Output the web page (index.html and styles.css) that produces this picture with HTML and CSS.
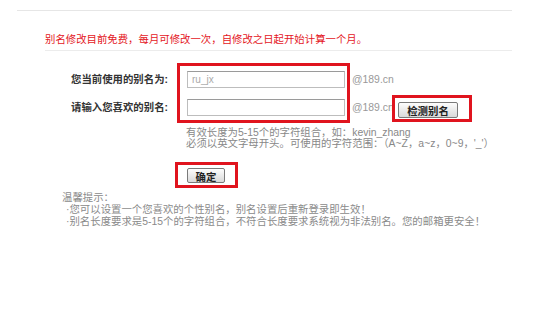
FILE: index.html
```html
<!DOCTYPE html>
<html lang="zh-CN">
<head>
    <meta charset="UTF-8">
    <meta name="viewport" content="width=device-width, initial-scale=1.0">
    <title>别名设置</title>
    <link rel="stylesheet" href="styles.css">
</head>
<body>
    <div class="wrap">
        <p class="notice">别名修改目前免费，每月可修改一次，自修改之日起开始计算一个月。</p>

        <div class="alias-form">
            <div class="labels">
                <label for="current">您当前使用的别名为:</label>
                <label for="alias">请输入您喜欢的别名:</label>
            </div>
            <div class="mark-box inputs">
                <input type="text" id="current" value="ru_jx" readonly>
                <input type="text" id="alias">
            </div>
            <div class="suffix">
                <span>@189.cn</span>
                <span>@189.cn</span>
            </div>
            <div class="mark-box check">
                <button type="button" class="btn check-btn">检测别名</button>
            </div>
        </div>

        <div class="hint">
            <p>有效长度为5-15个的字符组合，如：kevin_zhang</p>
            <p>必须以英文字母开头。可使用的字符范围：（A~Z，a~z，0~9，'_'）</p>
        </div>

        <div class="mark-box confirm">
            <button type="button" class="btn ok-btn">确定</button>
        </div>

        <div class="tips">
            <p class="tips-title">温馨提示：</p>
            <p>·您可以设置一个您喜欢的个性别名，别名设置后重新登录即生效！</p>
            <p>·别名长度要求是5-15个的字符组合，不符合长度要求系统视为非法别名。您的邮箱更安全！</p>
        </div>
    </div>
</body>
</html>
```

FILE: styles.css
```css
body {
    margin: 0;
    background-color: #fff;
    font-family: 'Liberation Sans', 'Noto Sans CJK SC', sans-serif;
    font-size: 10.4px;
    color: #333;
}
p {
    margin: 0;
}
.wrap {
    margin: 10px 0 0 17px;
    width: 495px;
    border-top: 1px solid #e6e6e6;
}
.notice {
    margin-left: 28px;
    padding: 22px 0 3px 0;
    line-height: 14px;
    color: #e4161d;
    border-bottom: 1px solid #ececec;
}
.alias-form {
    display: flex;
    align-items: flex-start;
    margin-top: 12px;
}
.labels {
    display: flex;
    flex-direction: column;
    gap: 11px;
    width: 110px;
    margin-left: 41px;
    margin-right: 9px;
    padding-top: 8px;
    text-align: right;
}
.labels label {
    line-height: 17px;
    font-weight: bold;
    color: #333;
    white-space: nowrap;
}
.mark-box {
    border: 3px solid #e0141e;
}
.inputs {
    display: flex;
    flex-direction: column;
    gap: 11px;
    padding: 5px 2px 4px 7px;
}
.inputs input {
    box-sizing: border-box;
    width: 158px;
    height: 17px;
    margin: 0;
    padding: 0 4px;
    border: 1px solid #bdbdbd;
    border-top-color: #9a9a9a;
    font-family: inherit;
    font-size: 10px;
    color: #aaa;
    outline: none;
}
.suffix {
    display: flex;
    flex-direction: column;
    gap: 11px;
    width: 40px;
    margin-left: 2px;
    padding-top: 8px;
    color: #999;
    white-space: nowrap;
}
.suffix span {
    line-height: 17px;
}
.check {
    margin-top: 32px;
    padding: 4px 11px 1px 3px;
}
.btn {
    box-sizing: border-box;
    display: block;
    margin: 0;
    padding: 0;
    border: 1px solid #7a7a7a;
    border-radius: 2px;
    background: linear-gradient(#fdfdfd, #d9d9d9);
    font-family: inherit;
    font-size: 10.4px;
    font-weight: bold;
    color: #222;
    cursor: pointer;
}
.check-btn {
    width: 60px;
    height: 16px;
}
.hint {
    margin: 4px 0 0 169px;
    line-height: 11px;
    color: #888;
    white-space: nowrap;
}
.confirm {
    width: fit-content;
    margin: 13px 0 0 158px;
    padding: 3px 10px 2px 9px;
}
.ok-btn {
    width: 38px;
    height: 15px;
}
.tips {
    margin: 4px 0 0 45px;
    line-height: 12px;
    color: #8a8a8a;
    white-space: nowrap;
}
.tips p:not(.tips-title) {
    padding-left: 4px;
}
```
